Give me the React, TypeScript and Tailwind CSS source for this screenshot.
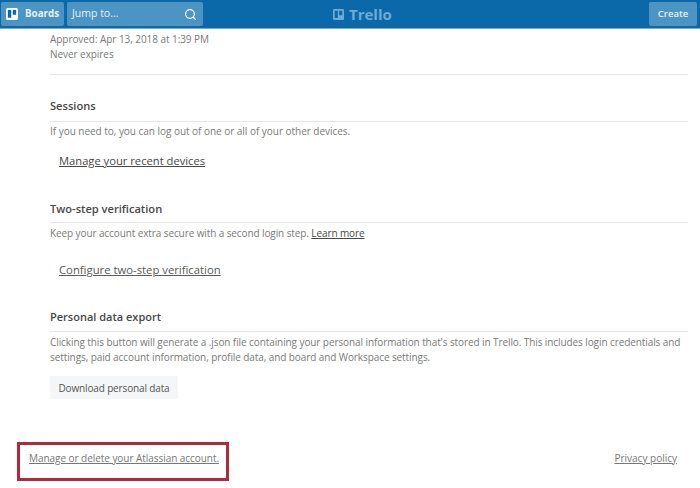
import { Search } from "lucide-react";

const font = { fontFamily: '"Open Sans", "Noto Sans", sans-serif' };

function TrelloMark({ className }: { className: string }) {
  return (
    <svg viewBox="0 0 16 16" className={className}>
      <rect width="16" height="16" rx="2" fill="currentColor" />
      <rect x="2.5" y="2.5" width="4.5" height="10.5" fill="#0b69aa" />
      <rect x="9" y="2.5" width="4.5" height="6.5" fill="#0b69aa" />
    </svg>
  );
}

export default function App() {
  return (
    <div className="w-[700px] h-[488px] overflow-hidden bg-white flex flex-col" style={font}>
      <header className="h-[29px] shrink-0 bg-[#0b69aa] border-b border-[#6fb0da] flex items-center pl-[1px] pr-[3px] relative">
        <div className="h-[24px] w-[63px] bg-[#4c94c4] rounded-[2px] flex items-center pl-[5px] gap-[7px]">
          <TrelloMark className="w-[12px] h-[12px] text-white" />
          <span className="text-[9.8px] font-bold text-[#e6f1f8]">Boards</span>
        </div>
        <div className="ml-[3px] h-[24px] w-[136px] bg-[#4c94c4] rounded-[2px] flex items-center justify-between pl-[5px] pr-[6px]">
          <span className="text-[10.5px] text-[#e6f1f8]">Jump to...</span>
          <Search className="w-[13px] h-[13px] text-white" strokeWidth={2.2} />
        </div>
        <div className="absolute left-[333px] top-[7px] flex items-center gap-[5px] text-[#6eacd6]">
          <TrelloMark className="w-[11px] h-[11px]" />
          <span className="text-[15px] leading-[15px] font-bold">Trello</span>
        </div>
        <div className="ml-auto h-[24px] w-[48px] bg-[#4c94c4] rounded-[2px] flex items-center justify-center text-[9.5px] font-semibold text-[#e6f1f8]">
          Create
        </div>
      </header>

      <main className="pl-[50px] pr-[12px] flex flex-col text-[10px] leading-[16px] text-[#7a7a7a]">
        <div className="pt-[3px] leading-[15px] tracking-[-0.06px]">
          <p>Approved: Apr 13, 2018 at 1:39 PM</p>
          <p>Never expires</p>
        </div>
        <hr className="mt-[12px] border-[#e6e6e6]" />

        <h2 className="mt-[23px] text-[11.1px] leading-[16px] font-semibold text-[#484848]">Sessions</h2>
        <hr className="mt-[7px] border-[#e6e6e6]" />
        <p className="mt-[1px] tracking-[-0.03px]">If you need to, you can log out of one or all of your other devices.</p>
        <a className="mt-[14px] ml-[9px] text-[11.2px] underline text-[#484848]">Manage your recent devices</a>

        <h2 className="mt-[32px] text-[11.1px] leading-[16px] font-semibold text-[#484848]">Two-step verification</h2>
        <hr className="mt-[5px] border-[#e6e6e6]" />
        <p className="mt-[2px] tracking-[-0.1px]">
          Keep your account extra secure with a second login step. <a className="underline text-[#484848]">Learn more</a>
        </p>
        <a className="mt-[21px] ml-[9px] text-[11.3px] underline text-[#5a5a5a]">Configure two-step verification</a>

        <h2 className="mt-[31px] text-[11px] leading-[16px] font-semibold text-[#484848]">Personal data export</h2>
        <hr className="mt-[6px] border-[#e6e6e6]" />
        <p className="mt-[3px] leading-[15px] tracking-[-0.09px]">
          Clicking this button will generate a .json file containing your personal information that's stored in Trello. This includes login credentials and settings, paid account information, profile data, and board and Workspace settings.
        </p>
        <div className="mt-[11px] w-[128px] h-[23px] bg-[#f5f6f7] flex items-center justify-center text-[10px] tracking-[-0.14px] text-[#555]">
          Download personal data
        </div>
      </main>

      <div className="mt-[43px] flex items-center justify-between pl-[17px] pr-[23px]">
        <div className="w-[212px] h-[39px] border-[3px] border-[#b2283c] flex items-center pl-[9px] pb-[7px]">
          <a className="text-[10px] tracking-[-0.05px] underline text-[#777]">Manage or delete your Atlassian account.</a>
        </div>
        <a className="mb-[7px] text-[10px] underline text-[#777]">Privacy policy</a>
      </div>
    </div>
  );
}
